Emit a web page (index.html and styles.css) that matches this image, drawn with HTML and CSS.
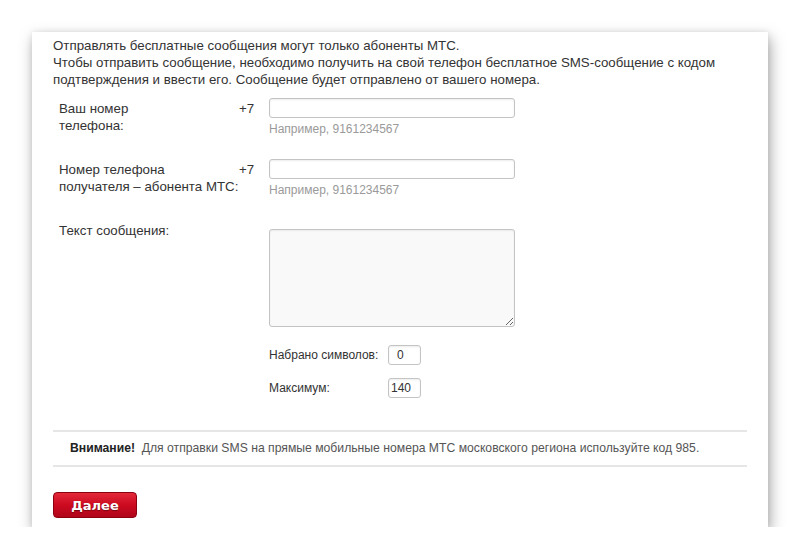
FILE: index.html
```html
<!DOCTYPE html>
<html lang="ru">
<head>
    <meta charset="UTF-8">
    <meta name="viewport" content="width=device-width, initial-scale=1.0">
    <title>Отправка SMS</title>
    <link rel="stylesheet" href="styles.css">
</head>
<body>
    <div class="card">
        <p class="intro">
            Отправлять бесплатные сообщения могут только абоненты МТС.<br>
            Чтобы отправить сообщение, необходимо получить на свой телефон бесплатное SMS-сообщение с кодом подтверждения и ввести его. Сообщение будет отправлено от вашего номера.
        </p>

        <form id="sms-form">
            <div class="row">
                <label class="label" for="from">Ваш номер<br>телефона:</label>
                <span class="prefix">+7</span>
                <div class="field">
                    <input type="text" id="from" maxlength="10">
                    <div class="hint">Например, 9161234567</div>
                </div>
            </div>

            <div class="row">
                <label class="label" for="to">Номер телефона<br>получателя – абонента МТС:</label>
                <span class="prefix">+7</span>
                <div class="field">
                    <input type="text" id="to" maxlength="10">
                    <div class="hint">Например, 9161234567</div>
                </div>
            </div>

            <div class="row">
                <label class="label" for="text">Текст сообщения:</label>
                <span class="prefix"></span>
                <div class="field">
                    <textarea id="text" maxlength="140" oninput="countChars(this)"></textarea>
                    <div class="counter">
                        <span>Набрано символов:</span>
                        <input type="text" id="count" class="small" value="0" readonly>
                    </div>
                    <div class="counter">
                        <span>Максимум:</span>
                        <input type="text" class="small left" value="140" readonly>
                    </div>
                </div>
            </div>

            <div class="notice">
                <b>Внимание!</b>&nbsp; Для отправки SMS на прямые мобильные номера МТС московского региона используйте код 985.
            </div>

            <button type="submit" class="btn">Далее</button>
        </form>
    </div>

    <script>
        function countChars(area) {
            document.getElementById('count').value = area.value.length;
        }

        document.getElementById('sms-form').addEventListener('submit', function(event) {
            event.preventDefault();
        });
    </script>
</body>
</html>
```

FILE: styles.css
```css
body {
    font-family: "Liberation Sans", Arial, sans-serif;
    font-size: 13.3px;
    line-height: 17px;
    color: #333;
    margin: 0;
    padding: 0;
    background-color: #fff;
}
.card {
    background: #fff;
    margin: 32px 0 0 32px;
    width: 736px;
    height: 495px;
    box-sizing: border-box;
    padding: 5px 21px 0 21px;
    box-shadow: 2px 6px 14px rgba(0, 0, 0, 0.35), 0 0 6px rgba(0, 0, 0, 0.08);
}
.intro {
    margin: 0 0 10px 0;
}
.row {
    display: grid;
    grid-template-columns: 180px 30px 246px;
    padding-left: 6px;
    margin-bottom: 21px;
}
.label,
.prefix {
    padding-top: 2px;
    white-space: nowrap;
}
input {
    display: block;
    width: 246px;
    height: 20px;
    box-sizing: border-box;
    border: 1px solid #c4c4c4;
    border-radius: 3px;
    box-shadow: inset 0 1px 2px rgba(0, 0, 0, 0.08);
    font-family: "Liberation Sans", Arial, sans-serif;
    font-size: 12px;
    color: #333;
    padding: 0 4px;
    margin: 0;
}
.hint {
    margin-top: 3px;
    font-size: 12px;
    color: #9a9a9a;
}
textarea {
    display: block;
    width: 246px;
    height: 98px;
    box-sizing: border-box;
    margin: 9px 0 0 0;
    border: 1px solid #c4c4c4;
    border-radius: 3px;
    background-color: #f9f9f9;
    box-shadow: inset 0 1px 2px rgba(0, 0, 0, 0.06);
}
.counter {
    display: flex;
    align-items: center;
    margin-top: 18px;
    font-size: 12px;
}
.counter + .counter {
    margin-top: 13px;
}
.counter span {
    width: 119px;
}
.small {
    width: 33px;
    padding: 0 8px;
}
.small.left {
    padding: 0 2px;
}
.notice {
    border-top: 2px solid #e6e6e6;
    border-bottom: 2px solid #e6e6e6;
    margin-top: 32px;
    padding: 9px 17px;
    font-size: 12.2px;
    line-height: 15px;
    color: #555;
}
.notice b {
    color: #222;
}
.btn {
    display: block;
    margin-top: 25px;
    width: 84px;
    height: 26px;
    border: 1px solid #8d0012;
    border-radius: 4px;
    background: linear-gradient(#e3283a, #cc0a20 50%, #b0061a);
    color: #fff;
    font-family: "DejaVu Sans", Tahoma, sans-serif;
    font-weight: bold;
    font-size: 13px;
    text-shadow: 0 1px 1px rgba(0, 0, 0, 0.4);
    cursor: pointer;
}
```
